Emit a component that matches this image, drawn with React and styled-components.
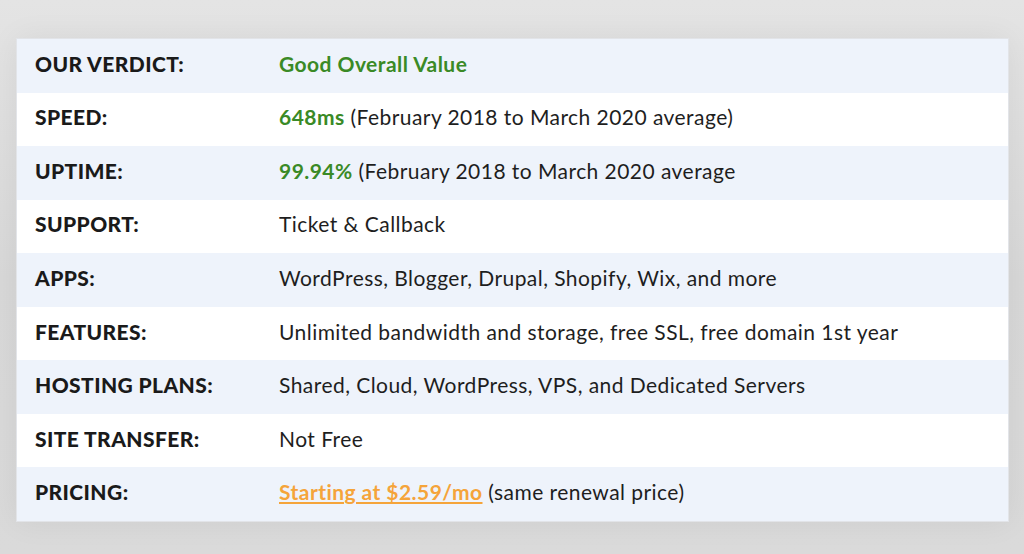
import React from "react";
import styled, { createGlobalStyle } from "styled-components";

const Global = createGlobalStyle`
  html, body { margin: 0; padding: 0; }
  body {
    width: 1024px;
    height: 554px;
    overflow: hidden;
    background: linear-gradient(180deg, #e4e4e4 0%, #d8d8d8 50%, #dadada 100%);
    font-family: Lato, "Open Sans", Arial, sans-serif;
  }
`;

const Page = styled.div`
  padding: 38px 15px 0 16px;
  box-sizing: border-box;
  height: 554px;
`;

const Table = styled.div`
  display: grid;
  grid-template-rows: repeat(9, 1fr);
  height: 484px;
  background: #fff;
  border: 1px solid #e2e4e8;
  box-sizing: border-box;
  box-shadow: 0 0 30px rgba(0, 0, 0, 0.06);
`;

const Row = styled.div`
  display: grid;
  grid-template-columns: 262px 1fr;
  align-items: center;
  padding-bottom: 5px;
  background: ${(p) => (p.$alt ? "#eef3fb" : "#ffffff")};
`;

const Label = styled.div`
  padding-left: 18px;
  font-size: 21px;
  font-weight: 900;
  color: #1a1a1a;
  letter-spacing: 0.4px;
`;

const Value = styled.div`
  font-size: 21px;
  color: #1e1e1e;
  letter-spacing: 0.45px;
`;

const Green = styled.span`
  color: #3a8a26;
  font-weight: 700;
`;

const Link = styled.a`
  color: #f5a43a;
  font-weight: 700;
  text-decoration: underline;
  text-underline-offset: 2px;
`;

const rows = [
  ["OUR VERDICT:", <Green>Good Overall Value</Green>],
  ["SPEED:", <><Green>648ms</Green> (February 2018 to March 2020 average)</>],
  ["UPTIME:", <><Green>99.94%</Green> (February 2018 to March 2020 average</>],
  ["SUPPORT:", "Ticket & Callback"],
  ["APPS:", "WordPress, Blogger, Drupal, Shopify, Wix, and more"],
  ["FEATURES:", "Unlimited bandwidth and storage, free SSL, free domain 1st year"],
  ["HOSTING PLANS:", "Shared, Cloud, WordPress, VPS, and Dedicated Servers"],
  ["SITE TRANSFER:", "Not Free"],
  ["PRICING:", <><Link href="#">Starting at $2.59/mo</Link> (same renewal price)</>],
];

export default function App() {
  return (
    <>
      <Global />
      <Page>
        <Table>
          {rows.map(([l, v], i) => (
            <Row key={l} $alt={i % 2 === 0}>
              <Label>{l}</Label>
              <Value>{v}</Value>
            </Row>
          ))}
        </Table>
      </Page>
    </>
  );
}
